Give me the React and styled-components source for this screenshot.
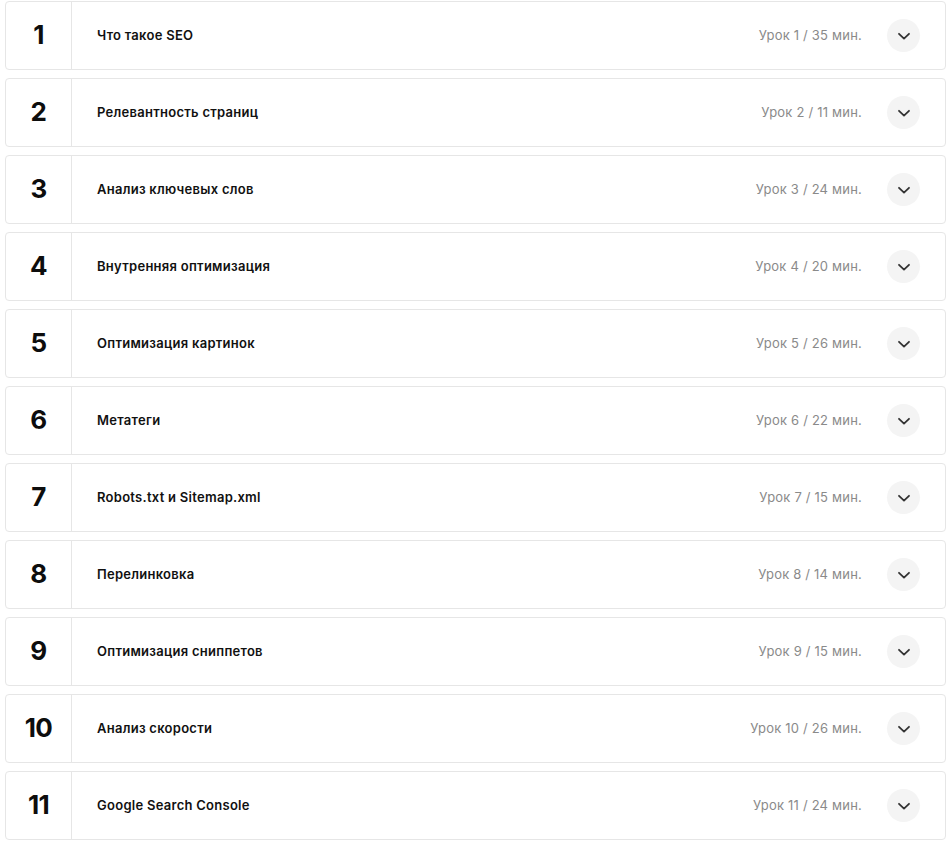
import React from "react";
import styled, { createGlobalStyle } from "styled-components";

const Global = createGlobalStyle`
  html, body { margin: 0; padding: 0; background: #fff; }
  body { font-family: Inter, "Noto Sans", sans-serif; color: #111; }
`;

const List = styled.div`
  display: flex;
  flex-direction: column;
  gap: 8px;
  padding: 1px 5px 0 5px;
`;

const Card = styled.div`
  display: flex;
  align-items: stretch;
  height: 69px;
  box-sizing: border-box;
  border: 1px solid #e6e6e6;
  border-radius: 4px;
  background: #fff;
`;

const Num = styled.div`
  width: 65px;
  flex: none;
  display: flex;
  align-items: center;
  justify-content: center;
  padding-bottom: 2px;
  border-right: 1px solid #e6e6e6;
  font-size: 26px;
  font-weight: 700;
  letter-spacing: -0.6px;
  color: #0d0d0d;
`;

const Title = styled.div`
  flex: 1;
  display: flex;
  align-items: center;
  padding: 0 0 2px 25px;
  font-size: 13px;
  font-weight: 600;
  letter-spacing: 0.27px;
  color: #111;
`;

const Meta = styled.div`
  display: flex;
  align-items: center;
  padding-bottom: 2px;
  font-size: 13px;
  letter-spacing: 0.2px;
  color: #8a8a8a;
  margin-right: 25px;
`;

const Toggle = styled.div`
  align-self: center;
  width: 33px;
  height: 33px;
  border-radius: 50%;
  background: #f4f4f4;
  display: flex;
  align-items: center;
  justify-content: center;
  margin-right: 25px;
`;

const lessons = [
  ["Что такое SEO", 35],
  ["Релевантность страниц", 11],
  ["Анализ ключевых слов", 24],
  ["Внутренняя оптимизация", 20],
  ["Оптимизация картинок", 26],
  ["Метатеги", 22],
  ["Robots.txt и Sitemap.xml", 15],
  ["Перелинковка", 14],
  ["Оптимизация сниппетов", 15],
  ["Анализ скорости", 26],
  ["Google Search Console", 24],
];

const Chevron = () => (
  <svg width="14" height="14" viewBox="0 0 14 14" fill="none">
    <path d="M2 4.8 L7 9.6 L12 4.8" stroke="#333" strokeWidth="1.8" strokeLinecap="round" strokeLinejoin="round" />
  </svg>
);

export default function App() {
  return (
    <>
      <Global />
      <List>
        {lessons.map(([t, m], i) => (
          <Card key={i}>
            <Num>{i + 1}</Num>
            <Title>{t}</Title>
            <Meta>Урок {i + 1} / {m} мин.</Meta>
            <Toggle><Chevron /></Toggle>
          </Card>
        ))}
      </List>
    </>
  );
}
